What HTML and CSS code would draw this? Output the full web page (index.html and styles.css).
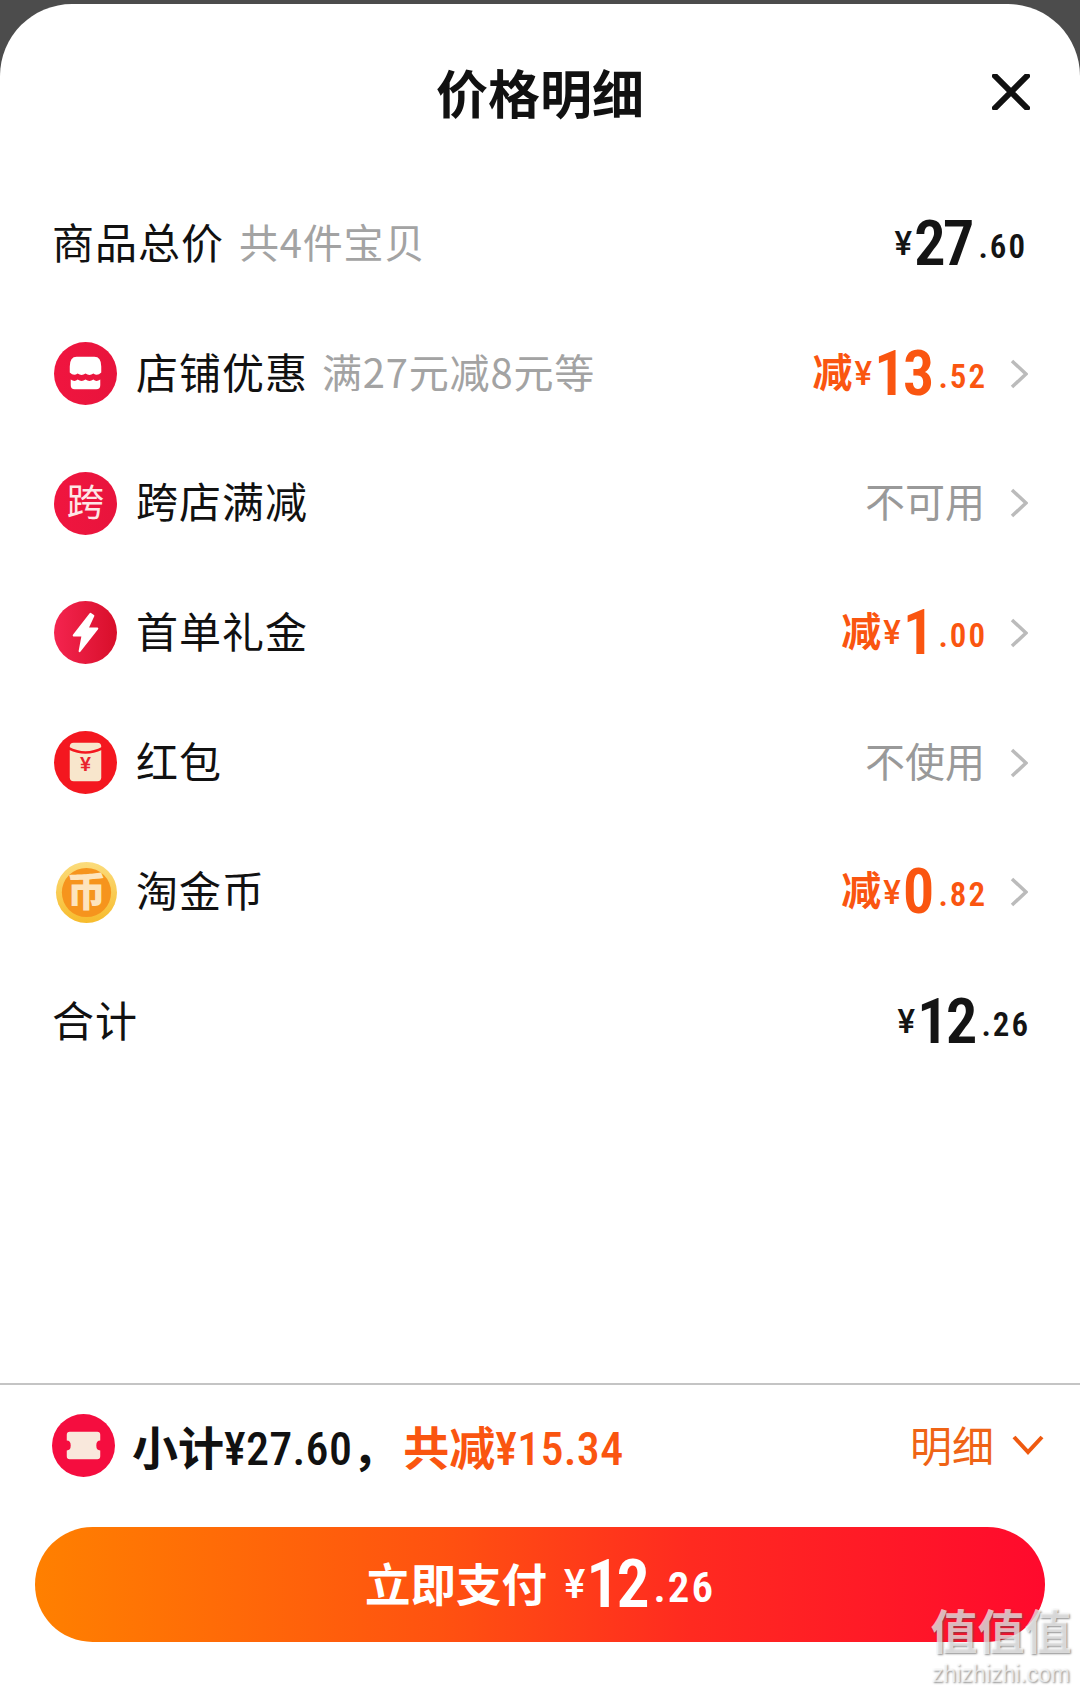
FILE: index.html

```html
<!DOCTYPE html>
<html lang="zh-CN">
<head>
    <meta charset="UTF-8">
    <title>价格明细</title>
    <link rel="stylesheet" href="styles.css">
</head>
<body>
    <div class="sheet">
        <header class="sheet-head">
            <h1>价格明细</h1>
            <svg class="close" viewBox="0 0 38 36"><path d="M3 2 L35 34 M35 2 L3 34"/></svg>
        </header>

        <div class="rows">
            <div class="row">
                <span class="name">商品总价</span>
                <span class="note first-note">共4件宝贝</span>
                <span class="price dark no-arrow"><i class="yen">¥</i><b class="big">27</b><i class="cents">.60</i></span>
            </div>

            <div class="row">
                <svg class="icon" viewBox="0 0 64 64">
                    <defs>
                        <linearGradient id="redA" x1="0" y1="0" x2="1" y2="0">
                            <stop offset="0" stop-color="#f0153f"/>
                            <stop offset="1" stop-color="#e8143c"/>
                        </linearGradient>
                    </defs>
                    <circle cx="32" cy="32" r="32" fill="url(#redA)"/>
                    <path fill="#fff" d="M23 15 H41 Q48 15 48 25 V31 Q44 35 40 32 Q36 35 32 32 Q28 35 24 32 Q20 35 16 31 V25 Q16 15 23 15 Z"/>
                    <path fill="#fff" d="M17 38 Q21 41 24 38 Q28 41 32 38 Q36 41 40 38 Q43 41 47 38 V44 Q47 48 43 48 H21 Q17 48 17 44 Z"/>
                </svg>
                <span class="name">店铺优惠</span>
                <span class="note">满27元减8元等</span>
                <span class="price"><em class="cut">减</em><i class="yen">¥</i><b class="big">13</b><i class="cents">.52</i></span>
                <svg class="arrow" viewBox="0 0 18 30"><path d="M2 2 L16 15 L2 28"/></svg>
            </div>

            <div class="row">
                <svg class="icon" viewBox="0 0 64 64">
                    <circle cx="32" cy="32" r="32" fill="url(#redA)"/>
                    <text class="icon-char" x="32" y="45" text-anchor="middle">跨</text>
                </svg>
                <span class="name">跨店满减</span>
                <span class="muted">不可用</span>
                <svg class="arrow" viewBox="0 0 18 30"><path d="M2 2 L16 15 L2 28"/></svg>
            </div>

            <div class="row">
                <svg class="icon" viewBox="0 0 64 64">
                    <defs>
                        <linearGradient id="redB" x1="0" y1="0" x2="1" y2="0">
                            <stop offset="0" stop-color="#f4244f"/>
                            <stop offset="1" stop-color="#d80f2a"/>
                        </linearGradient>
                    </defs>
                    <circle cx="32" cy="32" r="32" fill="url(#redB)"/>
                    <path fill="#fff" stroke="#fff" stroke-width="2" stroke-linejoin="round" d="M37 13 L20 35 H29 L26 51 L44 28 H34 L40 15 Z"/>
                </svg>
                <span class="name">首单礼金</span>
                <span class="price"><em class="cut">减</em><i class="yen">¥</i><b class="big">1</b><i class="cents">.00</i></span>
                <svg class="arrow" viewBox="0 0 18 30"><path d="M2 2 L16 15 L2 28"/></svg>
            </div>

            <div class="row">
                <svg class="icon" viewBox="0 0 64 64">
                    <circle cx="32" cy="32" r="32" fill="#f4171f"/>
                    <rect x="16" y="12" width="32" height="39" rx="4" fill="#f8e6cc"/>
                    <path fill="#f4171f" d="M15 16 Q32 25 49 16 V19 Q32 27 15 19 Z"/>
                    <text class="icon-yen" x="32" y="41" text-anchor="middle">¥</text>
                </svg>
                <span class="name">红包</span>
                <span class="muted">不使用</span>
                <svg class="arrow" viewBox="0 0 18 30"><path d="M2 2 L16 15 L2 28"/></svg>
            </div>

            <div class="row">
                <svg class="icon" viewBox="0 0 64 64">
                    <defs>
                        <linearGradient id="coin" x1="0" y1="0" x2="0" y2="1">
                            <stop offset="0" stop-color="#fbdc7c"/>
                            <stop offset="1" stop-color="#f7bb2c"/>
                        </linearGradient>
                    </defs>
                    <circle cx="33" cy="32" r="31" fill="url(#coin)"/>
                    <circle cx="33" cy="32" r="25" fill="#f6941d"/>
                    <text class="icon-coin" x="33" y="46" text-anchor="middle">币</text>
                </svg>
                <span class="name">淘金币</span>
                <span class="price"><em class="cut">减</em><i class="yen">¥</i><b class="big">0</b><i class="cents">.82</i></span>
                <svg class="arrow" viewBox="0 0 18 30"><path d="M2 2 L16 15 L2 28"/></svg>
            </div>

            <div class="row">
                <span class="name">合计</span>
                <span class="price dark no-arrow total"><i class="yen">¥</i><b class="big">12</b><i class="cents">.26</i></span>
            </div>
        </div>

        <footer class="sheet-foot">
            <div class="summary">
                <svg class="ticket" viewBox="0 0 64 64">
                    <circle cx="32" cy="32" r="32" fill="#f50d3f"/>
                    <path fill="#f9e8dc" d="M15 21 Q15 18 18 18 H46 Q49 18 49 21 V27 Q45 27 45 32 Q45 37 49 37 V43 Q49 46 46 46 H18 Q15 46 15 43 V37 Q19 37 19 32 Q19 27 15 27 Z"/>
                </svg>
                <span class="sum-text">小计<span class="num">¥27.60</span>，</span>
                <span class="sum-cut">共减<span class="num">¥15.34</span></span>
                <span class="detail">明细</span>
                <svg class="detail-arrow" viewBox="0 0 32 20"><path d="M2 2 L16 17 L30 2"/></svg>
            </div>
            <button class="pay"><span class="pay-label">立即支付</span><i class="yen">¥</i><b class="big">12</b><i class="cents">.26</i></button>
        </footer>
    </div>

    <!-- site watermark, sits over the button -->
    <div class="watermark">
        <div class="wm-big">值值值</div>
        <div class="wm-small">zhizhizhi.com</div>
    </div>
</body>
</html>
```

FILE: styles.css

```css
* {
    box-sizing: border-box;
}

body {
    margin: 0;
    height: 1687px;
    overflow: hidden;
    background: #4c4c4c;
    font-family: "Noto Sans CJK SC", "Noto Sans", sans-serif;
    color: #111;
    padding-top: 4px;
    position: relative;
}

.sheet {
    height: 1683px;
    background: #fff;
    border-radius: 72px 72px 0 0;
    display: flex;
    flex-direction: column;
}

.sheet-head {
    height: 175px;
    padding-top: 50px;
    position: relative;
    text-align: center;
}

.sheet-head h1 {
    margin: 0;
    font-size: 52px;
    line-height: 76px;
    font-weight: 700;
}

.close {
    position: absolute;
    top: 70px;
    right: 50px;
    width: 38px;
    height: 36px;
}

.close path {
    fill: none;
    stroke: #111;
    stroke-width: 6;
    stroke-linecap: round;
}

.rows {
    flex: 1;
}

.row {
    height: 129.7px;
    padding: 0 52px;
    display: flex;
    align-items: center;
}

.icon {
    width: 63px;
    height: 63px;
    margin: 0 19px 0 2px;
    flex: none;
}

.icon-char {
    font-size: 38px;
    fill: #fde6e6;
    font-family: "Noto Sans CJK SC", sans-serif;
}

.icon-yen {
    font-size: 20px;
    font-weight: 700;
    fill: #e8242c;
    font-family: "Liberation Sans", sans-serif;
}

.icon-coin {
    font-size: 40px;
    font-weight: 900;
    fill: #fde4bd;
    font-family: "Noto Sans CJK SC", sans-serif;
}

.name {
    font-size: 42px;
    line-height: 60px;
    letter-spacing: 1px;
    margin-bottom: 6px;
}

.note {
    font-size: 40px;
    line-height: 60px;
    letter-spacing: 0.8px;
    color: #a3a3a3;
    margin: 0 0 6px 14px;
}

.first-note {
    margin-left: 15px;
}

.muted {
    margin: 0 2px 6px auto;
    font-size: 40px;
    color: #999;
}

.price {
    margin-left: auto;
    color: #fa5510;
    display: flex;
    align-items: center;
    font-family: "Roboto", sans-serif;
    font-stretch: 75%;
    font-weight: 700;
}

.price.dark {
    color: #141414;
}

.price.no-arrow {
    margin-right: 1px;
}

.price.total {
    margin-right: -2px;
}

.price i,
.price em,
.pay i {
    font-style: normal;
}

.cut {
    font-family: "Noto Sans CJK SC", sans-serif;
    font-size: 40px;
    margin: 0 2px 8px 0;
    line-height: 50px;
}

.yen {
    font-size: 33px;
    font-family: "Roboto", sans-serif;
    font-stretch: 90%;
    font-weight: 500;
    margin-right: 3px;
}

.big {
    font-size: 63px;
    font-family: "Roboto", sans-serif;
    font-stretch: 75%;
    font-weight: 600;
    letter-spacing: -3px;
    margin-left: -1px;
    line-height: 70px;
}

.cents {
    font-size: 33px;
    letter-spacing: 2px;
    margin: 5px 0 0 7px;
    font-family: "Roboto", sans-serif;
    font-stretch: 87%;
    font-weight: 600;
}

.arrow {
    width: 18px;
    height: 30px;
    margin-left: 23px;
    flex: none;
}

.arrow path {
    fill: none;
    stroke: #bbb;
    stroke-width: 3.5;
}

.sheet-foot {
    border-top: 2px solid #c4c4c4;
    height: 304px;
    padding: 0 35px;
}

.summary {
    height: 142px;
    padding: 0 0 22px 17px;
    display: flex;
    align-items: center;
    font-size: 46px;
    font-weight: 700;
}

.ticket {
    width: 63px;
    height: 63px;
    margin-right: 17px;
    flex: none;
}

.num {
    font-family: "Roboto", sans-serif;
    font-stretch: 80%;
    letter-spacing: 0.3px;
    font-weight: 500;
}

.sum-text {
    margin-right: 5px;
}

.sum-cut {
    color: #fa5510;
}

.detail {
    margin: 0 0 4px auto;
    font-size: 42px;
    font-weight: 400;
    color: #ef6415;
}

.detail-arrow {
    width: 34px;
    height: 20px;
    margin-left: 17px;
    flex: none;
}

.detail-arrow path {
    fill: none;
    stroke: #ef5a10;
    stroke-width: 4;
}

.pay {
    display: flex;
    align-items: center;
    justify-content: center;
    width: 1010px;
    height: 115px;
    padding: 0;
    border: none;
    border-radius: 58px;
    background: linear-gradient(90deg, #ff8000, #ff5210 40%, #ff2a20 65%, #ff0a2d);
    color: #fff;
    font-family: "Noto Sans CJK SC", sans-serif;
    font-size: 45.500px;
    font-weight: 700;
}

.pay-label {
    margin: 0 17px 6px 0;
}

.pay .yen {
    font-size: 40px;
    font-stretch: 100%;
    margin-right: 2px;
}

.pay .big {
    font-size: 66px;
}

.pay .cents {
    font-size: 43px;
    margin: 4px 0 0 7px;
}

.watermark {
    position: absolute;
    top: 1596px;
    left: 928px;
    width: 146px;
    text-align: center;
    color: rgba(255, 255, 255, 0.68);
    text-shadow: 1px 1px 2px rgba(80, 80, 80, 0.65);
}

.wm-big {
    font-size: 47px;
    line-height: 66px;
    font-weight: 700;
    white-space: nowrap;
}

.wm-small {
    font-family: "Liberation Sans", sans-serif;
    font-size: 23px;
    line-height: 24px;
    white-space: nowrap;
}
```
